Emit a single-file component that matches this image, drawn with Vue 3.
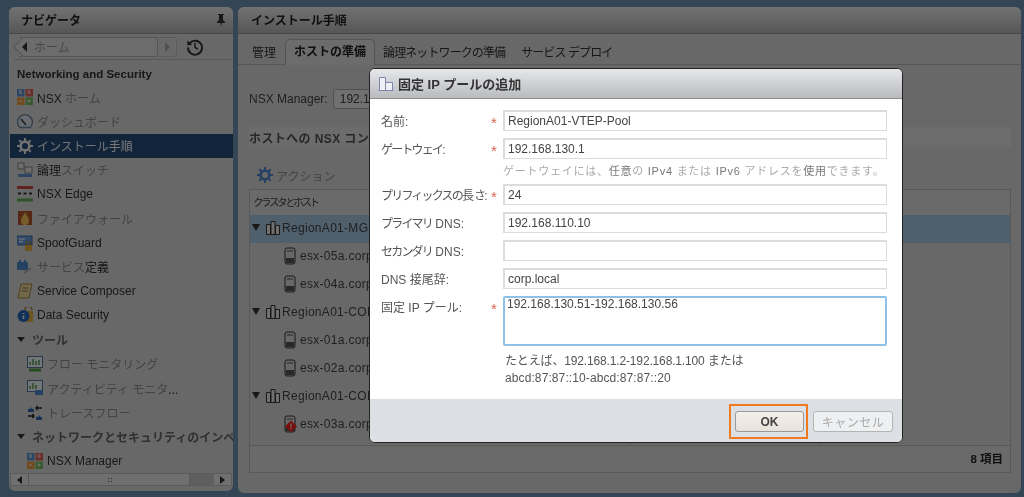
<template>
  <div class="page">
    <aside class="panel nav-panel">
      <div class="panel-header">
        <span>ナビゲータ</span>
        <svg class="pin" viewBox="0 0 12 14" width="12" height="14"><path d="M3 1h6v1H8v5l2 2v1H6.600L6 14l-.6-4H2V9l2-2V2H3z" fill="#333"/></svg>
      </div>
      <div class="crumb-bar">
        <div class="crumb-back">
          <span class="tri-left"></span>
          <span class="crumb-text">ホーム</span>
        </div>
        <div class="crumb-next"><span class="tri-right"></span></div>
        <svg class="history" viewBox="0 0 18 18" width="18" height="18">
          <path d="M3.600 5.200A7 7 0 1 1 2 9.500" fill="none" stroke="#333" stroke-width="2"/>
          <path d="M1 2.500l.5 5 5-.8z" fill="#333"/>
          <path d="M9 5v4.500l3 1.500" fill="none" stroke="#333" stroke-width="1.500"/>
        </svg>
      </div>
      <div class="nav-title">Networking and Security</div>
      <ul class="nav-list">
        <li
          v-for="item in navItems"
          :key="item.label"
          :class="['nav-item', { selected: item.selected, sub: item.sub, group: item.group }]"
        >
          <span v-if="item.group" class="tri-down"></span>
          <svg v-else class="nav-icon" viewBox="0 0 16 16" width="16" height="16">
            <template v-if="item.icon === 'grid'">
              <rect x="0" y="0" width="7.500" height="7.500" fill="#5f93d6"/>
              <rect x="8.500" y="0" width="7.500" height="7.500" fill="#e0605a"/>
              <rect x="0" y="8.500" width="7.500" height="7.500" fill="#f0a040"/>
              <rect x="8.500" y="8.500" width="7.500" height="7.500" fill="#78c060"/>
              <path d="M2 2h3M2 4h3M10.500 2h3M10.500 4h3M2 12h3M10.500 12h3M12 10.500v3" stroke="#fff" stroke-width="1"/>
            </template>
            <template v-else-if="item.icon === 'gauge'">
              <path d="M3 14.500A7.400 7.400 0 1 1 13 14.500z" fill="#dfe6ef" stroke="#6f86a6" stroke-width="1.400"/>
              <path d="M4 6l5 6" stroke="#444" stroke-width="1.600"/>
            </template>
            <template v-else-if="item.icon === 'gear'">
              <circle cx="8" cy="8" r="4.400" fill="none" stroke="#f0f0f0" stroke-width="2.600"/>
              <path d="M8 0v3M8 13v3M0 8h3M13 8h3M2.300 2.300l2 2M11.700 11.700l2 2M13.700 2.300l-2 2M4.300 11.700l-2 2" stroke="#f0f0f0" stroke-width="2"/>
            </template>
            <template v-else-if="item.icon === 'switch'">
              <rect x="1" y="1" width="6" height="6" fill="#e8e8e8" stroke="#888"/>
              <rect x="8" y="5" width="7" height="6" fill="#e8e8e8" stroke="#888"/>
              <path d="M1 13.500h14" stroke="#5f93d6" stroke-width="3"/>
            </template>
            <template v-else-if="item.icon === 'edge'">
              <path d="M0 1.500h16" stroke="#d04c44" stroke-width="3"/>
              <path d="M1 7.500h3M6.500 7.500h3M12 7.500h3" stroke="#333" stroke-width="2"/>
              <path d="M0 14h16" stroke="#5cb050" stroke-width="3"/>
            </template>
            <template v-else-if="item.icon === 'fire'">
              <rect x="1" y="1" width="14" height="14" fill="#b8552c"/>
              <path d="M8 2c1 3 4 5 4 9a4 4 0 0 1-8 0c0-4 3-6 4-9z" fill="#f7c65a"/>
            </template>
            <template v-else-if="item.icon === 'spoof'">
              <rect x="0" y="1" width="15" height="9" fill="#6aa0e0" stroke="#3a6ea8"/>
              <path d="M2 4h6M2 6.500h4" stroke="#fff"/>
              <rect x="8" y="10" width="7" height="6" fill="#e8b040"/>
              <path d="M9.500 10V8.500a2 2 0 0 1 4 0V10" fill="none" stroke="#a87820" stroke-width="1.200"/>
            </template>
            <template v-else-if="item.icon === 'service'">
              <rect x="0" y="3" width="11" height="8" rx="1" fill="#4f8ad0"/>
              <path d="M3 3V1M8 3V1" stroke="#4f8ad0" stroke-width="2"/>
              <path d="M7 14l7-5" stroke="#aaa" stroke-width="2"/>
            </template>
            <template v-else-if="item.icon === 'composer'">
              <path d="M4 1h11l-3 14H1z" fill="#f1dc9e" stroke="#a88440"/>
              <path d="M5.500 5h6M5 8h6" stroke="#8a7440"/>
            </template>
            <template v-else-if="item.icon === 'datasec'">
              <path d="M8 4V3a3.500 3.500 0 0 1 7 0" fill="none" stroke="#a87820" stroke-width="1.200"/>
              <rect x="6" y="4" width="10" height="11" fill="#e8b040"/>
              <circle cx="6.500" cy="9" r="6" fill="#2868c0"/>
              <path d="M6.500 6v1M6.500 8.500V12" stroke="#fff" stroke-width="1.600"/>
            </template>
            <template v-else-if="item.icon === 'flow'">
              <rect x="0.500" y="0.500" width="15" height="11" fill="#f4f8fc" stroke="#5878a0"/>
              <path d="M3 9V6M6 9V3M9 9V5M12 9V4" stroke="#60a060" stroke-width="1.600"/>
              <path d="M2 14h12" stroke="#4ca040" stroke-width="3"/>
            </template>
            <template v-else-if="item.icon === 'activity'">
              <rect x="0.500" y="0.500" width="15" height="11" fill="#f4f8fc" stroke="#5878a0"/>
              <path d="M3 9V6M6 9V3M9 9V5" stroke="#60a060" stroke-width="1.600"/>
              <rect x="8" y="10" width="8" height="5" fill="#4f8ad0"/>
            </template>
            <template v-else-if="item.icon === 'trace'">
              <path d="M1 7l3-4 3 4zM9 15l3-4 3 4z" fill="#4f8ad0"/>
              <rect x="1" y="5" width="6" height="3" fill="#3068b0"/>
              <rect x="9" y="13" width="6" height="3" fill="#3068b0"/>
              <path d="M15 4H9M10.500 2L9 4l1.500 2M1 12h6M5.500 10L7 12l-1.500 2" fill="none" stroke="#222" stroke-width="1.300"/>
            </template>
          </svg>
          <span class="nav-label">
            <span v-for="(run, i) in textRuns(item.label)" :key="i" :class="{ kana: run.kana }">{{ run.text }}</span>
          </span>
        </li>
      </ul>
      <div class="scrollbar">
        <span class="scroll-btn"><span class="tri-left small"></span></span>
        <span class="scroll-thumb"><i></i></span>
        <span class="scroll-track"></span>
        <span class="scroll-btn"><span class="tri-right dark"></span></span>
      </div>
    </aside>

    <main class="panel main-panel">
      <div class="panel-header"><span>インストール手順</span></div>
      <div class="tabs">
        <span v-for="tab in tabs" :key="tab" :class="['tab', { active: tab === 'ホストの準備' }]">{{ tab }}</span>
      </div>
      <div class="tab-body">
        <div class="manager-row">
          <span>NSX Manager:</span>
          <span class="manager-select">192.168.110.42</span>
        </div>
        <div class="section-title">ホストへの NSX コンポーネントのインストール</div>
        <div class="actions">
          <svg viewBox="0 0 16 16" width="16" height="16">
            <circle cx="8" cy="8" r="4.400" fill="none" stroke="#4f8ad0" stroke-width="2.600"/>
            <path d="M8 0v3M8 13v3M0 8h3M13 8h3M2.300 2.300l2 2M11.700 11.700l2 2M13.700 2.300l-2 2M4.300 11.700l-2 2" stroke="#4f8ad0" stroke-width="2"/>
          </svg>
          <span>アクション</span>
        </div>
        <div class="table">
          <div class="table-head">クラスタとホスト</div>
          <div class="table-rows">
            <div v-for="row in rows" :key="row.name" :class="['table-row', { cluster: row.cluster, picked: row.picked }]">
              <template v-if="row.cluster">
                <span class="tri-down tree"></span>
                <svg viewBox="0 0 16 16" width="16" height="16">
                  <path d="M1.500 4.500h4v10h-4zM6 1.500h4v13H6zM10.500 5.500h4v9h-4z" fill="#eee" stroke="#333"/>
                </svg>
              </template>
              <svg v-else viewBox="0 0 12 18" width="12" height="18" class="host-icon">
                <rect x="1" y="1" width="10" height="16" rx="2" fill="#ddd" stroke="#333"/>
                <path d="M3 4h6" stroke="#555"/>
                <rect x="2" y="11" width="8" height="5" fill="#555"/>
                <template v-if="row.alert">
                  <path d="M7 5.500l6 6-6 6-6-6z" fill="#ff2020"/>
                  <path d="M7 8.500v3.500M7 13v1.200" stroke="#fff" stroke-width="1.200"/>
                </template>
              </svg>
              <span>{{ row.name }}</span>
            </div>
          </div>
          <div class="table-foot">8 項目</div>
        </div>
      </div>
    </main>

    <div class="overlay">
      <div class="dialog">
        <div class="dialog-title">
          <svg viewBox="0 0 16 16" width="16" height="16">
            <path d="M1.500 14.500V1.500h6v13M7.500 14.500V6.500h7v8M0.500 14.500h15" fill="#eef0f6" stroke="#7f86ad"/>
          </svg>
          <span>固定 IP プールの追加</span>
        </div>
        <div class="form">
          <template v-for="field in fields" :key="field.label">
            <label :class="['field-label', { narrow: field.narrow }]">
              <span v-for="(run, i) in textRuns(field.label)" :key="i" :class="{ kana: run.kana }">{{ run.text }}</span>
            </label>
            <span class="star">{{ field.required ? '*' : '' }}</span>
            <textarea v-if="field.area" class="field-input area" :value="field.value" readonly></textarea>
            <input v-else class="field-input" :value="field.value" readonly />
            <template v-if="field.hint">
              <span></span><span></span>
              <div class="gw-hint">
                <span v-for="(run, i) in textRuns(field.hint)" :key="i" :class="{ kana: run.kana }">{{ run.text }}</span>
              </div>
            </template>
          </template>
          <span></span><span></span>
          <div class="pool-hint">
            <div>たとえば、192.168.1.2-192.168.1.100 または</div>
            <div class="pool-v6">abcd:87:87::10-abcd:87:87::20</div>
          </div>
        </div>
        <div class="dialog-footer">
          <div class="ok-ring"><button class="btn ok">OK</button></div>
          <button class="btn cancel">キャンセル</button>
        </div>
      </div>
    </div>
  </div>
</template>

<script setup>
const navItems = [
  { label: 'NSX ホーム', icon: 'grid' },
  { label: 'ダッシュボード', icon: 'gauge' },
  { label: 'インストール手順', icon: 'gear', selected: true },
  { label: '論理スイッチ', icon: 'switch' },
  { label: 'NSX Edge', icon: 'edge' },
  { label: 'ファイアウォール', icon: 'fire' },
  { label: 'SpoofGuard', icon: 'spoof' },
  { label: 'サービス定義', icon: 'service' },
  { label: 'Service Composer', icon: 'composer' },
  { label: 'Data Security', icon: 'datasec' },
  { label: 'ツール', group: true },
  { label: 'フロー モニタリング', icon: 'flow', sub: true },
  { label: 'アクティビティ モニタ...', icon: 'activity', sub: true },
  { label: 'トレースフロー', icon: 'trace', sub: true },
  { label: 'ネットワークとセキュリティのインベントリ', group: true },
  { label: 'NSX Manager', icon: 'grid', sub: true }
]

const tabs = ['管理', 'ホストの準備', '論理ネットワークの準備', 'サービス デプロイ']

const rows = [
  { name: 'RegionA01-MGMT', cluster: true, picked: true },
  { name: 'esx-05a.corp.local' },
  { name: 'esx-04a.corp.local' },
  { name: 'RegionA01-COMP01', cluster: true },
  { name: 'esx-01a.corp.local' },
  { name: 'esx-02a.corp.local' },
  { name: 'RegionA01-COMP02', cluster: true },
  { name: 'esx-03a.corp.local', alert: true }
]

const fields = [
  { label: '名前:', value: 'RegionA01-VTEP-Pool', required: true },
  {
    label: 'ゲートウェイ:',
    narrow: true,
    value: '192.168.130.1',
    required: true,
    hint: 'ゲートウェイには、任意の IPv4 または IPv6 アドレスを使用できます。'
  },
  { label: 'プリフィックスの長さ:', narrow: true, value: '24', required: true },
  { label: 'プライマリ DNS:', narrow: true, value: '192.168.110.10' },
  { label: 'セカンダリ DNS:', narrow: true, value: '' },
  { label: 'DNS 接尾辞:', value: 'corp.local' },
  { label: '固定 IP プール:', value: '192.168.130.51-192.168.130.56', required: true, area: true }
]

// かなの部分だけ別の見た目にするために分割する
const textRuns = (text) =>
  text.match(/[\u3040-\u30ff、。]+|[^\u3040-\u30ff、。]+/g).map((part) => ({
    text: part,
    kana: /[\u3040-\u30ff、。]/.test(part)
  }))
</script>

<style>
html, body {
  margin: 0;
  background: #2f4050;
}
</style>

<style scoped>
.page {
  position: relative;
  display: flex;
  gap: 5px;
  width: 1024px;
  height: 497px;
  box-sizing: border-box;
  padding: 7px 3px 4px 9px;
  overflow: hidden;
  background: #6f94b8;
  font-family: "Liberation Sans", "Noto Sans CJK JP", sans-serif;
  font-size: 12px;
  color: #444;
  filter: blur(0.35px);
}

.panel {
  display: flex;
  flex-direction: column;
  background: #dedede;
  border-radius: 6px;
  overflow: hidden;
}

.nav-panel {
  width: 224px;
  height: 484px;
}

.main-panel {
  flex: 1;
  height: 486px;
}

.panel-header {
  display: flex;
  align-items: center;
  justify-content: space-between;
  flex: none;
  height: 25px;
  padding: 0 6px 1px 12px;
  background: linear-gradient(#f2f2f2, #b8b8b8);
  border-bottom: 1px solid #999;
  font-size: 12px;
  font-weight: bold;
  color: #222;
}

.main-panel .panel-header {
  padding-left: 13px;
}

.crumb-bar {
  display: flex;
  align-items: center;
  flex: none;
  height: 25px;
  margin: 0 2px 0 5px;
  border-bottom: 1px solid #bbb;
}

.crumb-back {
  position: relative;
  display: flex;
  align-items: center;
  gap: 7px;
  width: 139px;
  height: 20px;
  margin-left: 5px;
  padding-left: 3px;
  box-sizing: border-box;
  background: #e6e6e6;
  border: 1px solid #b4b4b4;
  border-left: none;
  border-radius: 0 3px 3px 0;
}

.crumb-back::before {
  content: "";
  position: absolute;
  left: -3px;
  top: 2px;
  width: 13px;
  height: 13px;
  background: #e6e6e6;
  border-left: 1px solid #b4b4b4;
  border-bottom: 1px solid #b4b4b4;
  transform: rotate(45deg);
}

.crumb-back > * {
  position: relative;
}

.crumb-text {
  color: #999;
}

.crumb-next {
  display: flex;
  align-items: center;
  justify-content: center;
  width: 19px;
  height: 20px;
  box-sizing: border-box;
  background: #e0e0e0;
  border: 1px solid #c4c4c4;
  border-left: none;
  border-radius: 0 3px 3px 0;
}

.history {
  margin-left: 9px;
}

.tri-left, .tri-right, .tri-down {
  display: inline-block;
  width: 0;
  height: 0;
  flex: none;
}

.tri-left {
  border-top: 5px solid transparent;
  border-bottom: 5px solid transparent;
  border-right: 5px solid #333;
}

.tri-left.small {
  border-top-width: 4px;
  border-bottom-width: 4px;
}

.tri-right {
  border-top: 5px solid transparent;
  border-bottom: 5px solid transparent;
  border-left: 5px solid #aaa;
}

.tri-right.dark {
  border-top-width: 4px;
  border-bottom-width: 4px;
  border-left-color: #333;
}

.tri-down {
  border-left: 4px solid transparent;
  border-right: 4px solid transparent;
  border-top: 5px solid #333;
}

.nav-title {
  flex: none;
  height: 20px;
  margin-top: 5px;
  padding-left: 8px;
  line-height: 18px;
  font-size: 11.500px;
  font-weight: bold;
  color: #333;
}

.nav-list {
  flex: 1;
  margin: 0;
  padding: 0;
  list-style: none;
  overflow: hidden;
}

.nav-item {
  display: flex;
  align-items: center;
  gap: 4px;
  height: 24.250px;
  padding-left: 7px;
  margin-left: 1px;
  white-space: nowrap;
  color: #333;
}

.nav-item.sub {
  padding-left: 17px;
}

.kana {
  color: #8e8e8e;
}

.nav-item.group {
  gap: 7px;
  padding-left: 7px;
  font-weight: bold;
}

.nav-item.group .kana {
  color: #666;
}

.nav-item.selected {
  background: #264d7c;
  color: #fff;
}

.nav-item.selected .kana {
  color: #eef2f6;
}

.scrollbar {
  display: flex;
  flex: none;
  height: 11px;
  margin: 0 1px 5px 1px;
  border: 1px solid #c2c2c2;
  background: #e6e6e6;
}

.scroll-btn {
  display: flex;
  align-items: center;
  justify-content: center;
  width: 17px;
  background: #efefef;
}

.scroll-thumb {
  display: flex;
  align-items: center;
  justify-content: center;
  width: 160px;
  background: #ececec;
  border-left: 1px solid #bbb;
  border-right: 1px solid #bbb;
}

.scroll-thumb i {
  width: 5px;
  height: 6px;
  background: radial-gradient(circle, #555 40%, transparent 45%) 0 0 / 3px 3px;
}

.scroll-track {
  flex: 1;
  background: #c9c9c9;
}

.tabs {
  display: flex;
  align-items: flex-end;
  flex: none;
  height: 30px;
  border-bottom: 1px solid #b6b6b6;
  font-size: 12px;
}

.tab {
  height: 24px;
  line-height: 24px;
  padding: 0 8px;
  margin-bottom: -1px;
  letter-spacing: -0.9px;
  color: #333;
}

.tab:first-child {
  padding: 0 9px 0 14px;
  letter-spacing: 0;
}

.tab.active {
  background: #e6e6e6;
  border: 1px solid #b0b0b0;
  border-bottom-color: #e6e6e6;
  border-radius: 5px 5px 0 0;
  letter-spacing: 0;
  font-weight: bold;
  color: #222;
}

.tab-body {
  display: flex;
  flex-direction: column;
  flex: 1;
  padding: 0 10px 20px 11px;
  min-height: 0;
}

.manager-row {
  display: flex;
  align-items: center;
  gap: 5px;
  height: 20px;
  margin-top: 24px;
}

.manager-select {
  padding: 2px 6px;
  border: 1px solid #aaa;
  border-radius: 3px;
  background: #eee;
}

.section-title {
  height: 20px;
  margin-top: 18px;
  line-height: 24px;
  font-weight: bold;
  letter-spacing: 0.4px;
  background: #e6e6e6;
  color: #555;
}

.actions {
  display: flex;
  align-items: center;
  gap: 3px;
  height: 20px;
  margin-top: 18px;
  padding-left: 8px;
  color: #8e8e8e;
}

.table {
  display: flex;
  flex-direction: column;
  flex: 1;
  margin-top: 4px;
  border: 1px solid #bdbdbd;
  min-height: 0;
}

.table-head {
  flex: none;
  height: 25px;
  line-height: 25px;
  padding-left: 3px;
  font-size: 10.500px;
  letter-spacing: -2.400px;
  background: #e2e2e2;
  color: #444;
}

.table-rows {
  flex: 1;
  min-height: 0;
  overflow: hidden;
  background:
    linear-gradient(#c4c4c4, #c4c4c4) 381px 0 / 1px 100% no-repeat,
    linear-gradient(#c4c4c4, #c4c4c4) 570px 0 / 1px 100% no-repeat;
}

.table-row {
  display: flex;
  align-items: center;
  gap: 4px;
  height: 28px;
  box-sizing: border-box;
  padding: 0 0 3px 34px;
  font-size: 12px;
  letter-spacing: 0.3px;
  white-space: nowrap;
}

.table-row.cluster {
  gap: 1px;
  padding-left: 2px;
}

.table-row.picked {
  background: #a9cbe6;
}

.tri-down.tree {
  border-top-width: 7px;
  margin-right: 4px;
}

.host-icon {
  overflow: visible;
}

.table-foot {
  flex: none;
  height: 26px;
  line-height: 27px;
  padding-right: 7px;
  text-align: right;
  font-size: 11.500px;
  font-weight: bold;
  background: #e2e2e2;
  border-top: 1px solid #bdbdbd;
  color: #222;
}

.overlay {
  position: absolute;
  inset: 0;
  background: rgba(0, 0, 0, 0.53);
}

.dialog {
  position: absolute;
  left: 369px;
  top: 68px;
  display: flex;
  flex-direction: column;
  width: 534px;
  height: 375px;
  box-sizing: border-box;
  background: #fff;
  border: 1px solid #222;
  border-radius: 6px;
  overflow: hidden;
}

.dialog-title {
  display: flex;
  align-items: center;
  gap: 4px;
  flex: none;
  height: 30px;
  box-sizing: border-box;
  padding-left: 8px;
  background: linear-gradient(#e6e7ea, #b9bbbe);
  border-bottom: 1px solid #8c8c8c;
  font-size: 13px;
  font-weight: bold;
  color: #333;
}

.form {
  display: grid;
  grid-template-columns: 110px 12px 1fr;
  row-gap: 7px;
  padding: 11px 15px 0 11px;
}

.field-label {
  height: 21px;
  line-height: 25px;
  white-space: nowrap;
  color: #555;
}

.field-label .kana {
  color: #555;
}

.field-label.narrow .kana {
  letter-spacing: -1.800px;
}

.star {
  height: 21px;
  line-height: 25px;
  font-size: 15px;
  color: #d9634c;
}

.field-input {
  display: block;
  width: 100%;
  height: 21px;
  box-sizing: border-box;
  margin: 0;
  padding: 0 3px;
  border: 2px solid #dcdcdc;
  border-width: 2px 1px 1px 2px;
  border-radius: 0;
  outline: none;
  font: 12px "Liberation Sans", "Noto Sans CJK JP", sans-serif;
  color: #444;
}

.field-input.area {
  height: 50px;
  padding: 0 2px;
  border: 2px solid #8ec1e6;
  border-radius: 2px;
  resize: none;
  line-height: 13px;
}

.gw-hint {
  height: 11px;
  line-height: 11px;
  font-size: 11px;
  letter-spacing: 0.750px;
  white-space: nowrap;
  color: #777;
}

.gw-hint .kana {
  color: #aaa;
}

.pool-hint {
  padding-left: 2px;
  line-height: 17px;
  font-size: 12px;
  letter-spacing: -0.150px;
  color: #555;
}

.pool-v6 {
  letter-spacing: 0.100px;
}

.dialog-footer {
  display: flex;
  align-items: center;
  justify-content: flex-end;
  gap: 5px;
  flex: none;
  height: 43px;
  box-sizing: border-box;
  margin-top: auto;
  padding: 5px 9px 3px 0;
  background: #dcdfe3;
}

.ok-ring {
  display: flex;
  height: 35px;
  box-sizing: border-box;
  padding: 5px 2px 5px 4px;
  border: 2px solid #f07a22;
}

.btn {
  height: 21px;
  padding: 0;
  border-radius: 3px;
  font: 12px "Liberation Sans", "Noto Sans CJK JP", sans-serif;
}

.ok {
  width: 69px;
  background: linear-gradient(#f4efea, #e8e2dc);
  border: 1px solid #9a9a9a;
  font-weight: bold;
  color: #444;
}

.cancel {
  width: 80px;
  background: #eef0f2;
  border: 1px solid #b4b4b4;
  letter-spacing: 0.500px;
  color: #aaa;
}
</style>
